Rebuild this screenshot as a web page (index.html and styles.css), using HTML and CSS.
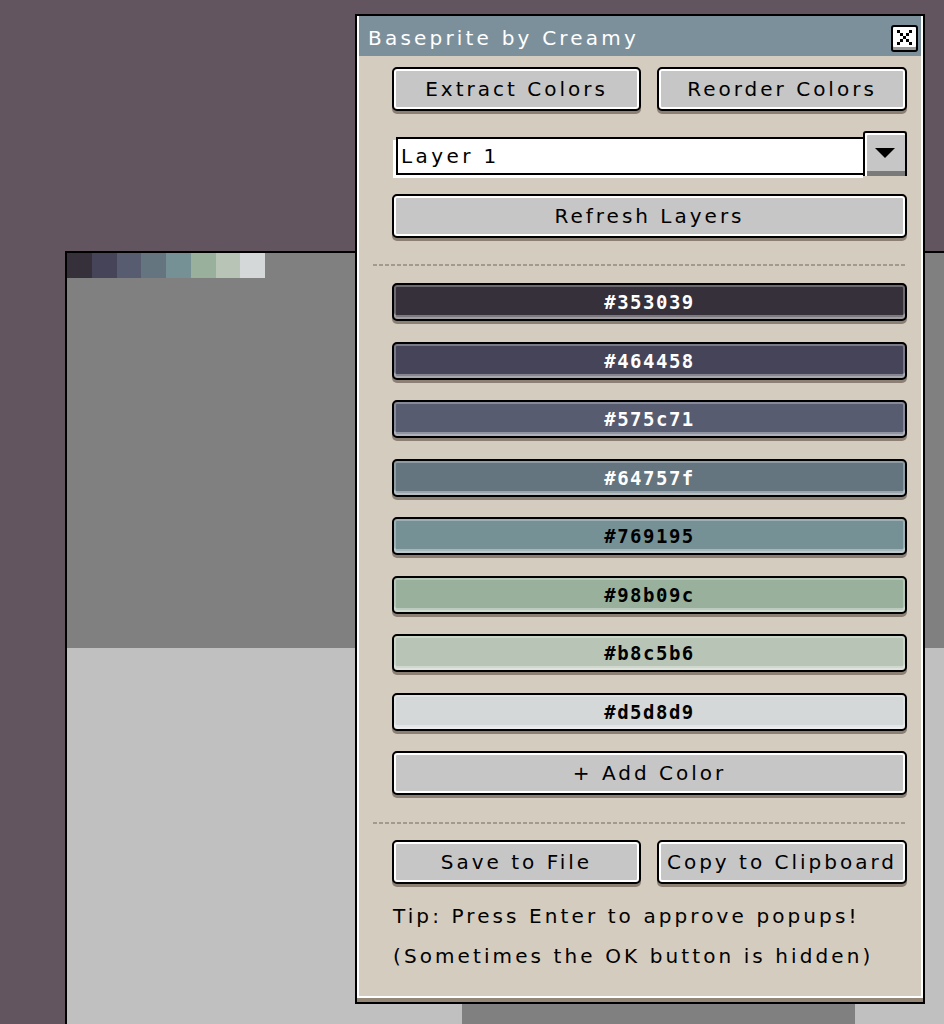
FILE: index.html
```html
<!DOCTYPE html>
<html>
  <head>
    <title>Baseprite by Creamy</title>
    <link rel="stylesheet" href="styles.css">
  </head>
  <body>
    <div class="canvas">
      <div class="sprite-top">
        <div class="palette">
          <span class="swatch" style="background-color: #353039"></span>
          <span class="swatch" style="background-color: #464458"></span>
          <span class="swatch" style="background-color: #575c71"></span>
          <span class="swatch" style="background-color: #64757f"></span>
          <span class="swatch" style="background-color: #769195"></span>
          <span class="swatch" style="background-color: #98b09c"></span>
          <span class="swatch" style="background-color: #b8c5b6"></span>
          <span class="swatch" style="background-color: #d5d8d9"></span>
        </div>
      </div>
      <div class="sprite-bottom">
        <div class="sprite-block"></div>
      </div>
    </div>

    <div class="dialog">
      <div class="frame">
        <div class="title-bar">
          <span class="title">Baseprite by Creamy</span>
          <button class="close-button">
            <svg width="15" height="15" viewBox="0 0 15 15">
              <rect x="0" y="0" width="3" height="3"/>
              <rect x="3" y="3" width="3" height="3"/>
              <rect x="6" y="6" width="3" height="3"/>
              <rect x="9" y="9" width="3" height="3"/>
              <rect x="12" y="12" width="3" height="3"/>
              <rect x="12" y="0" width="3" height="3"/>
              <rect x="9" y="3" width="3" height="3"/>
              <rect x="3" y="9" width="3" height="3"/>
              <rect x="0" y="12" width="3" height="3"/>
            </svg>
          </button>
        </div>

        <div class="dialog-body">
          <div class="button-row">
            <button class="btn">Extract Colors</button>
            <button class="btn">Reorder Colors</button>
          </div>

          <div class="combo">
            <div class="combo-field">Layer 1</div>
            <button class="combo-arrow">
              <svg width="20" height="10" viewBox="0 0 20 10">
                <polygon points="0,0 20,0 10,10"/>
              </svg>
            </button>
          </div>

          <button class="btn refresh">Refresh Layers</button>

          <div class="separator first-sep"></div>

          <div class="color-list">
            <button class="color-bar light-text" style="background-color: #353039">#353039</button>
            <button class="color-bar light-text" style="background-color: #464458">#464458</button>
            <button class="color-bar light-text" style="background-color: #575c71">#575c71</button>
            <button class="color-bar light-text" style="background-color: #64757f">#64757f</button>
            <button class="color-bar" style="background-color: #769195">#769195</button>
            <button class="color-bar" style="background-color: #98b09c">#98b09c</button>
            <button class="color-bar" style="background-color: #b8c5b6">#b8c5b6</button>
            <button class="color-bar" style="background-color: #d5d8d9">#d5d8d9</button>
          </div>

          <button class="btn add-color">+ Add Color</button>

          <div class="separator second-sep"></div>

          <div class="button-row save-row">
            <button class="btn">Save to File</button>
            <button class="btn">Copy to Clipboard</button>
          </div>

          <p class="tip">Tip: Press Enter to approve popups!<br>(Sometimes the OK button is hidden)</p>
        </div>
      </div>
    </div>
  </body>
</html>
```

FILE: styles.css
```css
body{
  margin: 0;
  padding: 251px 0 0 65px;
  box-sizing: border-box;
  width: 944px;
  height: 1024px;
  overflow: hidden;
  background-color: #63555f;
  font-family: "DejaVu Sans", sans-serif;
}

/* sprite canvas behind the dialog */
.canvas{
  border-top: 2px solid #000;
  border-left: 2px solid #000;
}

.sprite-top{
  height: 395px;
  background-color: #808080;
}

.palette{
  display: flex;
  height: 25px;
}

.swatch{
  flex: 0 0 24.75px;
}

.sprite-bottom{
  height: 400px;
  padding: 355px 0 0 395px;
  box-sizing: border-box;
  background-color: #c0c0c0;
}

.sprite-block{
  width: 393px;
  height: 40px;
  background-color: #808080;
}

/* dialog window */
.dialog{
  position: absolute;
  left: 355px;
  top: 14px;
  width: 570px;
  height: 990px;
  box-sizing: border-box;
  border: 2px solid #000;
  background-color: #948778;
}

.frame{
  height: 982px;
  box-sizing: border-box;
  border: 2px solid #fff;
  border-top: none;
  background-color: #d4ccbf;
}

.title-bar{
  display: flex;
  justify-content: space-between;
  align-items: flex-start;
  height: 40px;
  padding: 0 3px 0 9px;
  background-color: #7c909c;
}

.title{
  color: #fff;
  font-size: 20px;
  letter-spacing: 3.2px;
  line-height: 44px;
}

.close-button{
  margin-top: 9px;
  width: 27px;
  height: 27px;
  padding: 0;
  display: flex;
  align-items: center;
  justify-content: center;
  background-color: #fff;
  border: 2px solid #000;
  border-radius: 3px;
  box-shadow: inset 0 -3px 0 #9a9a9a;
}

.close-button svg{
  fill: #000;
  margin-bottom: 2px;
}

.dialog-body{
  display: flex;
  flex-direction: column;
  padding: 11px 14px 0 33px;
}

.btn{
  height: 44px;
  padding: 0;
  font-family: "DejaVu Sans", sans-serif;
  font-size: 20px;
  letter-spacing: 3px;
  color: #000;
  background-color: #c6c6c6;
  border: 2px solid #000;
  border-radius: 5px;
  box-shadow: inset 0 0 0 2px #fff, 0 3px 0 #8c8074;
}

.button-row{
  display: grid;
  grid-template-columns: 249px 250px;
  column-gap: 16px;
}

.combo{
  display: flex;
  align-items: flex-start;
  margin-top: 20px;
  height: 45px;
}

.combo-field{
  margin: 6px 0 0 4px;
  width: 470px;
  height: 38px;
  box-sizing: border-box;
  padding-left: 3px;
  border: 2px solid #000;
  background-color: #fff;
  box-shadow: -3px 3px 0 #fff;
  font-size: 20px;
  letter-spacing: 3.4px;
  line-height: 35px;
}

.combo-arrow{
  margin-left: -3px;
  width: 44px;
  height: 45px;
  padding: 0 0 4px 0;
  display: flex;
  align-items: center;
  justify-content: center;
  background-color: #c6c6c6;
  border: 2px solid #000;
  border-bottom: none;
  border-radius: 3px 3px 0 0;
  box-shadow: inset 2px 2px 0 #fff, inset 0 -5px 0 #7a7a7a;
}

.combo-arrow svg{
  fill: #000;
}

.refresh{
  margin-top: 18px;
}

.separator{
  height: 2px;
  margin: 0 2px 0 -19px;
  background-image: repeating-linear-gradient(90deg, #a3998d 0 4px, transparent 4px 6px);
}

.first-sep{
  margin-top: 26px;
}

.color-list{
  display: flex;
  flex-direction: column;
  row-gap: 20.57px;
  margin-top: 17px;
}

.color-bar{
  height: 38px;
  padding: 0;
  font-family: "DejaVu Sans Mono", monospace;
  font-weight: bold;
  font-size: 19px;
  letter-spacing: 1.5px;
  color: #000;
  border: 2px solid #000;
  border-radius: 5px;
  box-shadow: inset 0 0 0 2px rgba(255, 255, 255, .28), inset 0 -4px 0 rgba(255, 255, 255, .35), 0 3px 0 #8c8074;
}

.color-bar.light-text{
  color: #fff;
}

.add-color{
  margin-top: 20px;
}

.second-sep{
  margin-top: 27px;
}

.save-row{
  margin-top: 16px;
}

.tip{
  margin: 12px 0 0 1px;
  font-size: 20px;
  letter-spacing: 3.1px;
  line-height: 40px;
  color: #000;
}
```
